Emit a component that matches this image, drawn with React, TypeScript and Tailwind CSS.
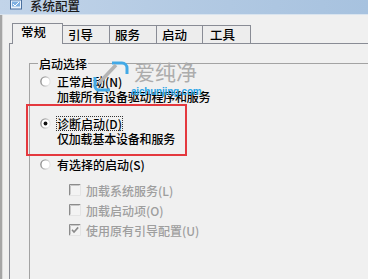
import React from "react";

function Radio({ checked }: { checked?: boolean }) {
  return (
    <svg width="11" height="11" viewBox="0 0 11 11" className="shrink-0">
      <defs>
        <linearGradient id={checked ? "rg1" : "rg0"} x1="0" y1="0" x2="1" y2="0.3">
          <stop offset="0" stopColor="#7c7c7c" />
          <stop offset="0.55" stopColor="#b8b8b8" />
          <stop offset="1" stopColor="#e6e6e6" />
        </linearGradient>
      </defs>
      <circle cx="5.5" cy="5.5" r="4.6" fill="#ffffff" stroke={`url(#${checked ? "rg1" : "rg0"})`} strokeWidth="1.3" />
      {checked && <circle cx="5.5" cy="5.5" r="1.9" fill="#111111" />}
    </svg>
  );
}

function Check({ checked }: { checked?: boolean }) {
  return (
    <svg width="12" height="12" viewBox="0 0 12 12" className="shrink-0">
      <rect x="0" y="0" width="12" height="12" fill="#f3f3f3" />
      <path d="M0.5 11.5 V0.5 H11.5" stroke="#8c8c8c" strokeWidth="1" fill="none" />
      <path d="M1.5 10.5 V1.5 H10.5" stroke="#c8c8c8" strokeWidth="1" fill="none" />
      <path d="M0.5 11.5 H11.5 V0.5" stroke="#e4e4e4" strokeWidth="1" fill="none" />
      {checked && (
        <path d="M3 5.8 L5 8 L9.2 3.4" stroke="#8a8a8a" strokeWidth="1.6" fill="none" />
      )}
    </svg>
  );
}

export default function App() {
  const tabs = [
    { t: "引导", w: "w-[47px]", pl: "pl-[5px]" },
    { t: "服务", w: "w-[47px]", pl: "pl-[5px]" },
    { t: "启动", w: "w-[46px]", pl: "pl-[5px]" },
    { t: "工具", w: "w-[48px]", pl: "pl-[7px]" },
  ];
  return (
    <div className="relative w-[368px] h-[279px] overflow-hidden bg-[#f0f0f0] flex flex-col text-[12px] font-medium text-black [font-family:'Noto_Sans_CJK_SC','Noto_Sans',sans-serif]">
      {/* title bar */}
      <div className="h-[15px] shrink-0 flex items-start bg-linear-to-r from-[#c2d4e9] via-[#b3cae3] to-[#a7c2df] border-b border-[#d9e4ef]">
        <svg width="12" height="10" viewBox="0 0 12 10" className="ml-[10px] shrink-0">
          <rect x="0.5" y="0" width="11" height="9" fill="#eaf2fb" stroke="#4a6f9e" />
          <rect x="2" y="1.5" width="8" height="5" fill="#7fb0e2" />
          <path d="M3 4 L5 6 L9 2" stroke="#ffffff" strokeWidth="1" fill="none" />
        </svg>
        <span className="ml-[8px] leading-[13px] -mt-[1px] text-[12.5px] text-[#1a1a1a]">系统配置</span>
      </div>

      {/* body */}
      <div className="flex-1 flex">
        <div className="w-[2px] bg-[#a5a5a5]" />
        <div className="w-[1px] bg-[#dadada]" />
        <div className="flex-1 flex flex-col pl-[6px]">
          {/* tabs */}
          <div className="mt-[8px] h-[20px] flex items-end relative z-10">
            <div className="ml-[3px] w-[51px] h-[21px] -mb-[1px] border border-b-0 border-[#898c95] bg-[#f0f0f0] pl-[8px] leading-[16px] text-[12.5px]">
              常规
            </div>
            {tabs.map((x) => (
              <div
                key={x.t}
                className={`${x.w} ${x.pl} h-[18px] border-t border-r border-[#898c95] bg-[#ededed] leading-[17px] text-[12.5px]`}
              >
                {x.t}
              </div>
            ))}
          </div>

          {/* panel */}
          <div className="flex-1 flex flex-col border-l border-t border-[#898c95] bg-[#f0f0f0] pl-[19px] pt-[19px]">
            <div className="relative flex-1 border-l border-t border-[#a3a3a3] pt-[10px] pl-[10px] flex flex-col">
              <span className="absolute -top-[7px] left-[8px] px-[1px] bg-[#f0f0f0] leading-[14px]">启动选择</span>

              <div className="flex items-start gap-[6px] leading-[15px]">
                <div className="mt-[2px]"><Radio /></div>
                <div className="flex flex-col">
                  <span>正常启动(N)</span>
                  <span className="tracking-[-0.2px]">加载所有设备驱动程序和服务</span>
                </div>
              </div>

              <div className="mt-[12px] flex items-start gap-[6px] leading-[15px]">
                <div className="mt-[2px]"><Radio checked /></div>
                <div className="flex flex-col items-start">
                  <span className="-ml-[1px] px-[0px] border border-dotted border-[#333] leading-[13px]">诊断启动(D)</span>
                  <span className="tracking-[-0.2px]">仅加载基本设备和服务</span>
                </div>
              </div>

              <div className="mt-[11px] flex items-start gap-[6px] leading-[15px]">
                <div className="mt-[2px]"><Radio /></div>
                <span>有选择的启动(S)</span>
              </div>

              <div className="mt-[8px] flex flex-col pl-[29px] text-[#9e9e9e]">
                {[
                  { t: "加载系统服务(L)", c: false },
                  { t: "加载启动项(O)", c: false },
                  { t: "使用原有引导配置(U)", c: true },
                ].map((r) => (
                  <div key={r.t} className="h-[20px] flex items-center gap-[5px]">
                    <Check checked={r.c} />
                    <span className="leading-[15px]">{r.t}</span>
                  </div>
                ))}
              </div>

              {/* red highlight annotation */}
              <div className="absolute left-[-4px] top-[40px] w-[161px] h-[52px] border-2 border-[#e4383e]" />
            </div>
          </div>
        </div>
      </div>

      {/* watermark */}
      <div className="absolute left-[92px] top-[61px] pointer-events-none">
        <svg width="38" height="31" viewBox="0 0 38 31">
          <path d="M20 2 H30 A5 5 0 0 1 35 7 V13" stroke="#43a9e6" strokeWidth="3" fill="none" />
          <path d="M3 16 V25 A4 4 0 0 0 7 29 H18" stroke="#43a9e6" strokeWidth="3" fill="none" />
          <path d="M7 22 L24 4" stroke="#b4b4b4" strokeWidth="3.5" fill="none" />
        </svg>
      </div>
      <div className="absolute left-[134px] top-[59px] text-[21px] leading-[24px] font-normal text-[#acacac] pointer-events-none">爱纯净</div>
      <div className="absolute left-[131px] top-[86px] text-[10px] leading-[11px] font-bold text-[#2aa4e6] tracking-[-0.2px] [font-family:'Liberation_Sans',sans-serif] pointer-events-none">
        aichunjing.com
      </div>
    </div>
  );
}
